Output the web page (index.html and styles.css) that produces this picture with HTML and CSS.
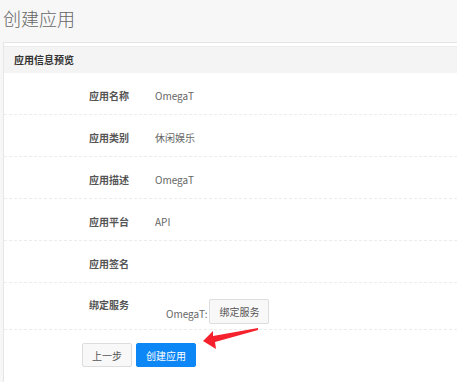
FILE: index.html
```html
<!DOCTYPE html>
<html lang="zh-CN">
<head>
    <meta charset="UTF-8">
    <meta name="viewport" content="width=device-width, initial-scale=1.0">
    <title>创建应用</title>
    <link rel="stylesheet" href="styles.css">
</head>
<body>
    <div class="page">
        <h1 class="titulo">创建应用</h1>

        <div class="panel">
            <div class="panel-heading">应用信息预览</div>
            <div class="panel-body">
                <div class="fila">
                    <div class="etiqueta">应用名称</div>
                    <div class="valor">OmegaT</div>
                </div>
                <div class="fila">
                    <div class="etiqueta">应用类别</div>
                    <div class="valor">休闲娱乐</div>
                </div>
                <div class="fila">
                    <div class="etiqueta">应用描述</div>
                    <div class="valor">OmegaT</div>
                </div>
                <div class="fila">
                    <div class="etiqueta">应用平台</div>
                    <div class="valor">API</div>
                </div>
                <div class="fila">
                    <div class="etiqueta">应用签名</div>
                    <div class="valor"></div>
                </div>
                <div class="fila fila-servicio">
                    <div class="etiqueta">绑定服务</div>
                    <div class="valor servicio">
                        <span>OmegaT:</span>
                        <button class="btn btn-default">绑定服务</button>
                    </div>
                </div>

                <div class="acciones">
                    <button class="btn btn-default">上一步</button>
                    <button class="btn btn-primary">创建应用</button>
                </div>
            </div>
        </div>

        <!-- flecha roja de la captura -->
        <svg class="flecha" width="457" height="382" viewBox="0 0 457 382">
            <polygon points="203,341 213,331 213,336 258,328 258,330 215,342 216,349" fill="#f5222d"/>
        </svg>
    </div>
</body>
</html>
```

FILE: styles.css
```css
body {
    margin: 0;
    background: #f7f7f7;
    font-family: "Noto Sans CJK SC", "Noto Sans", Arial, sans-serif;
    color: #555;
}

.page {
    position: relative;
    height: 382px;
    overflow: hidden;
}

.titulo {
    margin: 0;
    height: 42px;
    padding-left: 3px;
    font-size: 18px;
    line-height: 36px;
    font-weight: 300;
    color: #666;
}

.panel {
    margin-left: 3px;
    margin-right: -10px;
    background: #fff;
    border: 1px solid #e6e6e6;
    border-right: none;
    height: 400px;
}

.panel-heading {
    height: 26px;
    margin-top: 3px;
    border-top: 1px solid #ececec;
    background: #f4f4f4;
    padding-left: 10px;
    font-size: 10px;
    font-weight: bold;
    line-height: 26px;
    color: #333;
}

.fila {
    display: flex;
    height: 41px;
    border-bottom: 1px dashed #ececec;
    font-size: 10px;
    line-height: 15px;
}

.etiqueta {
    width: 125px;
    padding-top: 15px;
    text-align: right;
    font-weight: bold;
    color: #555;
}

.valor {
    padding-top: 15px;
    margin-left: 26px;
    color: #666;
}

.fila-servicio {
    height: 46px;
}

.fila-servicio .etiqueta {
    padding-top: 14px;
}

.servicio {
    margin-left: 37px;
    padding-top: 10px;
    display: flex;
    align-items: center;
    gap: 2px;
}

.servicio span {
    padding-top: 4px;
}

.btn {
    font-family: inherit;
    font-size: 10px;
    height: 25px;
    padding: 0 9px;
    border-radius: 2px;
    cursor: pointer;
}

.btn-default {
    background: #f8f8f8;
    border: 1px solid #ddd;
    color: #555;
}

.btn-primary {
    background: #0d86f6;
    border: 1px solid #0d86f6;
    color: #fff;
}

.acciones {
    display: flex;
    gap: 4px;
    padding: 13px 0 0 78px;
}

.acciones .btn {
    height: 24px;
}

.flecha {
    position: absolute;
    left: 0;
    top: 0;
    pointer-events: none;
}
```
